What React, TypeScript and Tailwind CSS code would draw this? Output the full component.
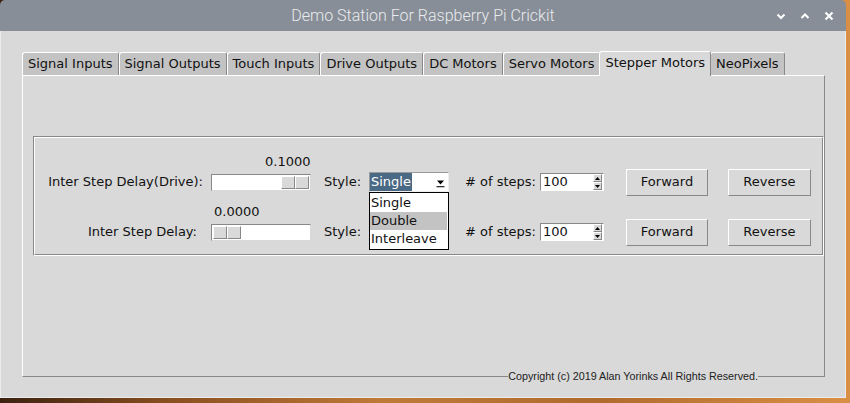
import React from "react"

const tabs = [
  "Signal Inputs",
  "Signal Outputs",
  "Touch Inputs",
  "Drive Outputs",
  "DC Motors",
  "Servo Motors",
  "Stepper Motors",
  "NeoPixels"
]

const ACTIVE = "Stepper Motors"

function SliderThumb() {
  return (
    <div className="flex">
      <div className="w-[14px] h-[13px] bg-[#d9d9d9] border-t border-l border-t-white border-l-white border-b border-r border-b-[#888] border-r-[#888]" />
      <div className="w-[14px] h-[13px] bg-[#d9d9d9] border-t border-l border-t-white border-l-white border-b border-r border-b-[#888] border-r-[#888]" />
    </div>
  )
}

function Scale({ atEnd }: { atEnd: boolean }) {
  return (
    <div
      className={
        "ml-[8px] w-[100px] h-[17px] bg-white p-[1px] flex border border-t-[#888] border-l-[#888] border-b-[#d9d9d9] border-r-[#d9d9d9] " +
        (atEnd ? "justify-end" : "justify-start")
      }
    >
      <SliderThumb />
    </div>
  )
}

function Combo({ open }: { open: boolean }) {
  return (
    <div className="relative w-[80px] h-[20px]">
      <div className="w-full h-full bg-white flex items-center border border-t-[#9a9a9a] border-l-[#9a9a9a] border-b-[#eeeeee] border-r-[#eeeeee]">
        {/* the closed combo in the second row sits under the open list */}
        <span className={"h-[18px] leading-[18px] px-[1px] " + (open ? "bg-[#4a6984] text-white" : "invisible")}>
          Single
        </span>
        <div className="flex-1" />
        <svg width="9" height="9" viewBox="0 0 9 9" className="mr-[3px] mt-[3px]">
          <polygon points="1,1.5 8,1.5 4.5,5.5" fill="#000" />
          <rect x="0.5" y="7" width="8" height="1.3" fill="#333" />
        </svg>
      </div>
      {open && (
        <div className="absolute left-0 top-full z-20 w-[80px] bg-white border border-black py-[1px] pr-[1px]">
          <div className="h-[18px] leading-[18px] pl-[1px]">Single</div>
          <div className="h-[18px] leading-[18px] pl-[1px] bg-[#c3c3c3]">Double</div>
          <div className="h-[18px] leading-[18px] pl-[1px]">Interleave</div>
        </div>
      )}
    </div>
  )
}

function Spin() {
  return (
    <div className="w-[64px] h-[18px] bg-white flex items-center border border-t-[#888] border-l-[#888] border-b-white border-r-white">
      <span className="pl-[2px] leading-[16px]">100</span>
      <div className="flex-1" />
      <div className="flex flex-col mr-[1px]">
        <div className="w-[9px] h-[8px] flex items-center justify-center bg-[#d9d9d9] border-t border-l border-t-white border-l-white border-b border-r border-b-[#888] border-r-[#888]">
          <svg width="5" height="3" viewBox="0 0 5 3">
            <polygon points="0,3 5,3 2.5,0" fill="#000" />
          </svg>
        </div>
        <div className="w-[9px] h-[8px] flex items-center justify-center bg-[#d9d9d9] border-t border-l border-t-white border-l-white border-b border-r border-b-[#888] border-r-[#888]">
          <svg width="5" height="3" viewBox="0 0 5 3">
            <polygon points="0,0 5,0 2.5,3" fill="#000" />
          </svg>
        </div>
      </div>
    </div>
  )
}

function Btn({ label, w }: { label: string; w: string }) {
  return (
    <div className={w + " h-[27px] flex items-center justify-center bg-[#d9d9d9] border border-t-white border-l-white border-b-[#888] border-r-[#888]"}>
      {label}
    </div>
  )
}

function MotorRow({ label, labelPad, value, valueOffset, atEnd, open }: { label: string; labelPad: string; value: string; valueOffset: string; atEnd: boolean; open: boolean }) {
  return (
    <div>
      <div className="h-[14px] leading-[16px] flex">
        <span className={valueOffset}>{value}</span>
      </div>
      <div className="h-[28px] flex items-center">
        <div className={"w-[168px] text-right " + labelPad}>{label}</div>
        <Scale atEnd={atEnd} />
        <div className="ml-[13px] w-[45px]">Style:</div>
        <Combo open={open} />
        <div className="ml-[16px] w-[75px]"># of steps:</div>
        <Spin />
        <div className="ml-[22px]">
          <Btn label="Forward" w="w-[82px]" />
        </div>
        <div className="ml-[20px]">
          <Btn label="Reverse" w="w-[83px]" />
        </div>
      </div>
    </div>
  )
}

export default function App() {
  return (
    <div className="w-[850px] h-[403px] overflow-hidden bg-[linear-gradient(90deg,#3b2210_0%,#8a4f20_20%,#c07a38_45%,#b06a2c_70%,#d98f45_100%)]">
      <div className="w-[846px] h-[398px] flex flex-col rounded-t-[5px] overflow-hidden text-[13px] text-[#111] font-['DejaVu_Sans',sans-serif]">

        {/* Title bar */}
        <div className="h-[31px] bg-[#878e97] grid grid-cols-[1fr_auto_1fr] items-center">
          <div />
          <div className="font-['Roboto',sans-serif] font-light text-[16px] text-[#e9ebee]">
            Demo Station For Raspberry Pi Crickit
          </div>
          <div className="flex justify-end items-center gap-[14px] pr-[12px]">
            <svg width="10" height="8" viewBox="0 0 10 8">
              <path d="M1.5 2.5 L5 6 L8.5 2.5" stroke="#fff" strokeWidth="2" fill="none" />
            </svg>
            <svg width="10" height="8" viewBox="0 0 10 8">
              <path d="M1.5 6 L5 2.5 L8.5 6" stroke="#fff" strokeWidth="2" fill="none" />
            </svg>
            <svg width="10" height="10" viewBox="0 0 10 10">
              <path d="M1.5 1.5 L8.5 8.5 M8.5 1.5 L1.5 8.5" stroke="#fff" strokeWidth="2" fill="none" />
            </svg>
          </div>
        </div>

        {/* Window body */}
        <div className="flex-1 bg-[#d9d9d9] border-l border-r border-b border-[#ececec] pl-[21px] pt-[20px]">

          {/* Tabs */}
          <div className="flex items-end h-[24px]">
            {tabs.map((t) =>
              t === ACTIVE ? (
                <div
                  key={t}
                  className="relative z-10 -mx-[1px] -mb-[1px] h-[25px] px-[5px] leading-[22px] bg-[#d9d9d9] rounded-t-[3px] border-l border-t border-r border-l-white border-t-white border-r-[#888]"
                >
                  {t}
                </div>
              ) : (
                <div
                  key={t}
                  className="h-[23px] px-[5px] leading-[21px] bg-[#c3c3c3] rounded-t-[3px] border-l border-t border-r border-l-white border-t-white border-r-[#888]"
                >
                  {t}
                </div>
              )
            )}
          </div>

          {/* Tab pane */}
          <div className="w-[803px] h-[302px] flex flex-col border border-t-white border-l-white border-r-[#888] border-b-[#888]">
            <div className="mt-[60px] ml-[10px] border border-t-[#888] border-l-[#888] border-b-white border-r-white">
              <div className="border border-t-white border-l-white border-b-[#888] border-r-[#888] pt-[16px] pb-[8px]">
                <MotorRow label="Inter Step Delay(Drive):" labelPad="" value="0.1000" valueOffset="ml-[230px]" atEnd={true} open={true} />
                <div className="h-[8px]" />
                <MotorRow label="Inter Step Delay:" labelPad="pr-[6px]" value="0.0000" valueOffset="ml-[179px]" atEnd={false} open={false} />
              </div>
            </div>
            <div className="flex-1" />
            <div className="h-[13px] -mb-[7px] flex justify-end pr-[66px]">
              <span className="bg-[#d9d9d9] leading-[13px] text-[10.75px] text-[#222] font-['Liberation_Sans',sans-serif]">
                Copyright (c) 2019 Alan Yorinks All Rights Reserved.
              </span>
            </div>
          </div>
        </div>
      </div>
    </div>
  )
}
